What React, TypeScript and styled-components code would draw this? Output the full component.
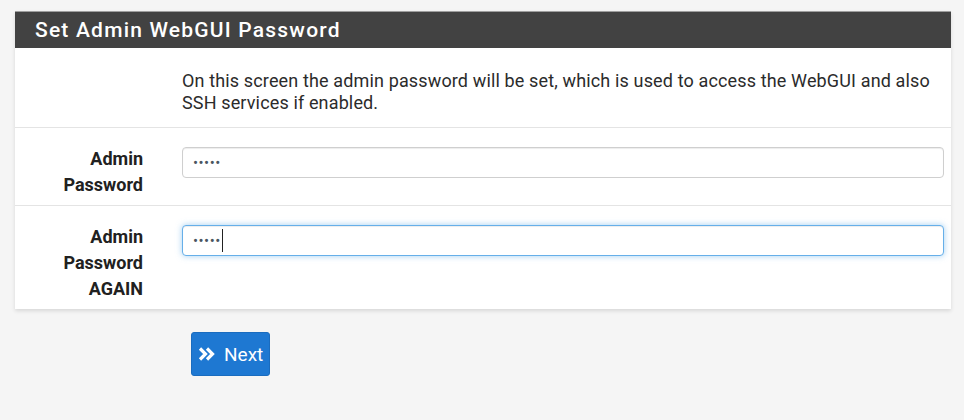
import styled, { createGlobalStyle } from 'styled-components';

const GlobalStyle = createGlobalStyle`
  body {
    margin: 0;
    background: #f5f5f5;
    font-family: Roboto, "Liberation Sans", sans-serif;
    color: #212121;
  }
`;

const Page = styled.div`
  padding: 11px 13px 0 15px;
`;

const Panel = styled.section`
  background: #fff;
  box-shadow: 0 2px 4px rgba(0, 0, 0, 0.12);
`;

const PanelHeading = styled.h2`
  margin: 0;
  height: 37px;
  display: flex;
  align-items: center;
  padding: 0 20px;
  background: #424242;
  color: #fff;
  font-size: 21px;
  font-weight: 500;
  letter-spacing: 1.2px;
  border-top: 1px solid #9e9e9e;
  box-sizing: border-box;
`;

const Row = styled.div<{ $first?: boolean }>`
  display: grid;
  grid-template-columns: 152px 1fr;
  padding: ${(p) => (p.$first ? '22px 0 13px' : '19px 0 7px')};
  border-top: ${(p) => (p.$first ? 'none' : '1px solid #e4e4e4')};
`;

const Label = styled.label`
  padding-right: 24px;
  text-align: right;
  font-size: 18px;
  font-weight: 700;
  line-height: 26px;
  margin-top: -1px;
`;

const Field = styled.div`
  position: relative;
  padding-left: 15px;
  padding-right: 7px;
`;

const Help = styled.p`
  margin: 0;
  font-size: 18px;
  letter-spacing: 0.14px;
  line-height: 22px;
  color: #2b2b2b;
`;

const Input = styled.input<{ $focused?: boolean }>`
  display: block;
  width: 100%;
  box-sizing: border-box;
  height: 31px;
  padding: 0 10px;
  font-family: Roboto, "Liberation Sans", sans-serif;
  font-size: 15px;
  letter-spacing: 0.5px;
  color: #4a5560;
  background: #fff;
  border-radius: 4px;
  outline: none;
  border: 1px solid ${(p) => (p.$focused ? '#66afe9' : '#cfcfcf')};
  box-shadow: ${(p) =>
    p.$focused
      ? 'inset 0 1px 1px rgba(0,0,0,.075), 0 0 6px rgba(102,175,233,.6)'
      : 'inset 0 1px 1px rgba(0,0,0,.075)'};
`;

const Caret = styled.span<{ $left: number }>`
  position: absolute;
  top: 4px;
  left: ${(p) => p.$left}px;
  width: 1px;
  height: 23px;
  background: #222;
`;

const Actions = styled.div`
  padding: 23px 0 0 176px;
`;

const Button = styled.button`
  display: inline-flex;
  align-items: center;
  gap: 8px;
  height: 44px;
  padding: 0 6px 0 5px;
  background: #1e78d2;
  border: 1px solid #1a6cbf;
  border-radius: 3px;
  color: #fff;
  font-family: Roboto, "Liberation Sans", sans-serif;
  font-size: 19px;
  cursor: pointer;
`;

const DoubleChevron = () => (
  <svg width="19" height="16" viewBox="0 0 19 16" fill="none">
    <path d="M3 2.5l5.5 5.5-5.5 5.5M10 2.5l5.5 5.5-5.5 5.5" stroke="#fff" strokeWidth="3.2" strokeLinejoin="miter" />
  </svg>
);

export default function App() {
  return (
    <>
      <GlobalStyle />
      <Page>
        <Panel>
          <PanelHeading>Set Admin WebGUI Password</PanelHeading>
          <Row $first>
            <div />
            <Field>
              <Help>
                On this screen the admin password will be set, which is used to access the WebGUI and also SSH
                services if enabled.
              </Help>
            </Field>
          </Row>
          <Row>
            <Label htmlFor="pw1">
              Admin
              <br />
              Password
            </Label>
            <Field>
              <Input id="pw1" type="password" defaultValue="admin" />
            </Field>
          </Row>
          <Row>
            <Label htmlFor="pw2">
              Admin
              <br />
              Password
              <br />
              AGAIN
            </Label>
            <Field>
              <Input id="pw2" type="password" defaultValue="admin" $focused />
              <Caret $left={55} />
            </Field>
          </Row>
        </Panel>
        <Actions>
          <Button type="button">
            <DoubleChevron />
            Next
          </Button>
        </Actions>
      </Page>
    </>
  );
}
